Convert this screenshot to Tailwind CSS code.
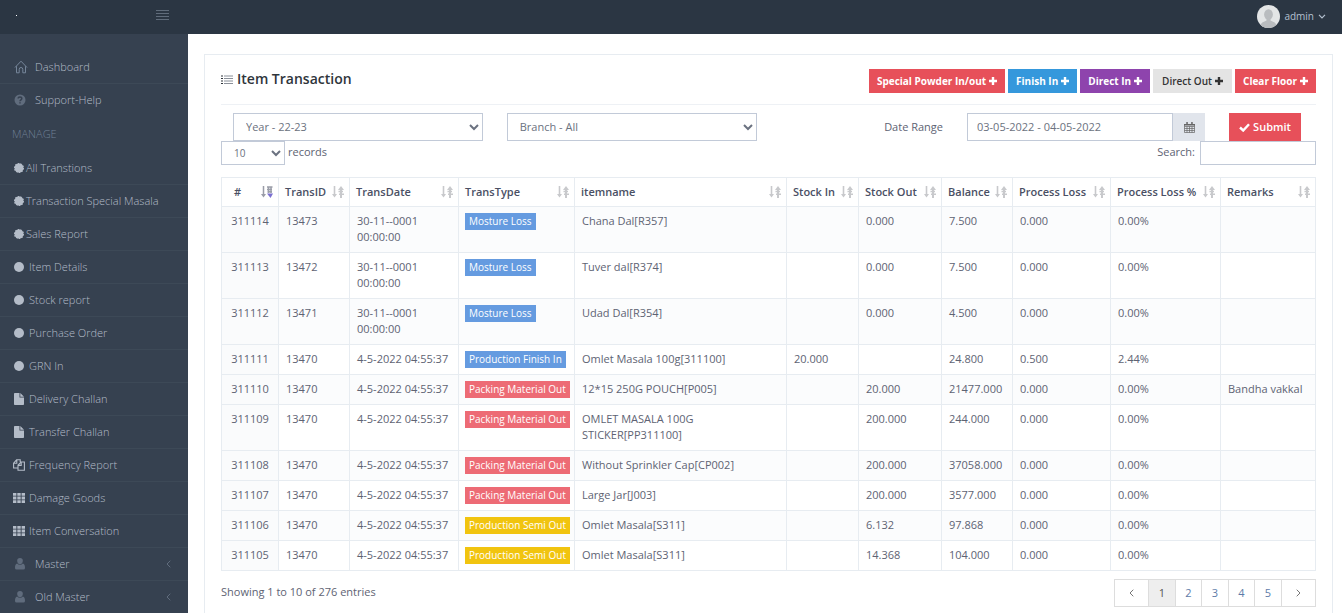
<!DOCTYPE html>
<html lang="en">
<head>
    <meta charset="UTF-8">
    <meta name="viewport" content="width=device-width, initial-scale=1.0">
    <title>Item Transaction</title>
    <script src="https://cdn.jsdelivr.net/npm/@tailwindcss/browser@4"></script>
</head>
<body class="flex h-screen flex-col overflow-hidden bg-white font-['Open_Sans',sans-serif] text-[11px] leading-4 text-[#5e6373]">

    <!-- icons -->
    <svg class="hidden">
        <symbol id="i-home" viewBox="0 0 14 14"><path d="M1 7.5 7 1.2l6 6.3M2.5 6.2v6.6h2.7V9.3a1.8 1.8 0 0 1 3.6 0v3.5h2.7V6.2" fill="none" stroke="currentColor"/></symbol>
        <symbol id="i-help" viewBox="0 0 12 12"><circle cx="6" cy="6" r="5.5" fill="currentColor"/><path d="M4.2 4.6c0-2.2 3.6-2.2 3.6 0C7.8 5.8 6 5.8 6 7.3M6 8.2v1.3" fill="none" stroke="#364150" stroke-width="1.5"/></symbol>
        <symbol id="i-cog" viewBox="0 0 10 10"><circle cx="5" cy="5" r="4.5" fill="currentColor"/><circle cx="5" cy="5" r="4.4" fill="none" stroke="currentColor" stroke-width="1.2" stroke-dasharray="1.6 1.1"/></symbol>
        <symbol id="i-dot" viewBox="0 0 10 10"><circle cx="5" cy="5" r="5" fill="currentColor"/></symbol>
        <symbol id="i-file" viewBox="0 0 10 12"><path d="M0 .8Q0 0 .8 0H5.5v4.5H10v6.7q0 .8-.8.8H.8Q0 12 0 11.2zM6.3 0 10 3.7H6.3z" fill="currentColor"/></symbol>
        <symbol id="i-copy" viewBox="0 0 12 12"><path d="M4.5 9H.6V4.2L3.6.8h3.6V3M3.8.8v3.4H.6M5 6.2 8 3h3.4v8.3H5zM8.2 3v3.4H5" fill="none" stroke="currentColor" stroke-width="1.1"/></symbol>
        <symbol id="i-th" viewBox="0 0 12 10"><path d="M0 0h3.4v2.8H0zM4.3 0h3.4v2.8H4.3zM8.6 0H12v2.8H8.6zM0 3.6h3.4v2.8H0zM4.3 3.6h3.4v2.8H4.3zM8.6 3.6H12v2.8H8.6zM0 7.2h3.4V10H0zM4.3 7.2h3.4V10H4.3zM8.6 7.2H12V10H8.6z" fill="currentColor"/></symbol>
        <symbol id="i-user" viewBox="0 0 10 12"><path d="M5 0a2.8 2.8 0 0 1 2.8 3C7.8 4.8 6.6 6.2 5 6.2S2.2 4.8 2.2 3A2.8 2.8 0 0 1 5 0M2.2 5.4C3.5 7.3 6.5 7.3 7.8 5.4 9.5 5.7 10 7.5 10 10q0 1.6-1.6 1.6H1.6Q0 11.6 0 10C0 7.5.5 5.7 2.2 5.4" fill="currentColor"/></symbol>
        <symbol id="i-left" viewBox="0 0 5 8"><path d="M4.3.7 1 4l3.300 3.300" fill="none" stroke="currentColor"/></symbol>
        <symbol id="i-right" viewBox="0 0 5 8"><path d="M.7.7 4 4 .7 7.3" fill="none" stroke="currentColor"/></symbol>
        <symbol id="i-plus" viewBox="0 0 8 8"><path d="M4 0v8M0 4h8" fill="none" stroke="currentColor" stroke-width="2.4"/></symbol>
        <symbol id="i-sort" viewBox="0 0 12 12"><path d="M2.5 0v10" stroke="currentColor" stroke-width="1.6"/><path d="M0 8h5L2.5 11.5zM6 4h6L9 0z" fill="currentColor"/><path d="M9 3v9" stroke="currentColor" stroke-width="2"/><path d="M6.5 5.5H11M7 8.3h5" stroke="currentColor" stroke-width="1.4"/></symbol>
        <symbol id="i-sorted" viewBox="0 0 12 12"><path d="M2.5 0v10M6 1h5.5M6 3.4h5M6.5 5.8H11M7.5 1v6M10 1v6" fill="none" stroke="#9a9da8" stroke-width="1.5"/><path d="M0 8h5L2.5 11.5z" fill="#9a9da8"/><path d="M6 7.5h6L9.5 12z" fill="#7a6fd0"/></symbol>
    </svg>

    <header class="flex h-[34px] shrink-0 items-center bg-[#2b3643] text-[#b4c0d0]">
        <div class="flex w-[188px] items-center justify-between pr-[19px] pb-1 pl-4">
            <a href="#" aria-label="Home" class="h-px w-px bg-white"></a>
            <button type="button" aria-label="Toggle menu" class="flex w-[13px] flex-col gap-[2px]">
                <span class="h-px w-full bg-[#606c7b]"></span>
                <span class="h-px w-full bg-[#606c7b]"></span>
                <span class="h-px w-full bg-[#606c7b]"></span>
                <span class="h-px w-full bg-[#606c7b]"></span>
            </button>
        </div>
        <button type="button" class="ml-auto flex items-center gap-1 pr-4 pb-[2px] text-[10px]">
            <svg class="h-[23px] w-[23px] rounded-full" viewBox="0 0 23 23"><path fill="#e3e5e6" d="M0 0h23v23H0z"/><ellipse cx="11.5" cy="9.5" rx="4.4" ry="5.2" fill="#b9bcbf"/><path d="M3 23c0-6 4-6 6.5-7.5V13h4v2.5C16 17 20 17 20 23z" fill="#b9bcbf"/></svg>
            <span>admin</span>
            <svg class="h-[5px] w-2" viewBox="0 0 8 5"><path d="M1 .8 4 3.8l3-3" fill="none" stroke="currentColor" stroke-width="1.2"/></svg>
        </button>
    </header>

    <div class="flex min-h-0 flex-1">
        <nav class="w-[188px] shrink-0 bg-[#364150] pt-[17px] font-light text-[#b4bcc8]">
            <a href="#" class="flex h-[33px] items-center gap-[7px] border-b border-[#3d4957] pl-[14px]"><svg class="h-[14px] w-[14px] text-[#76869a]"><use href="#i-home"/></svg>Dashboard</a>
            <a href="#" class="flex h-8 items-center gap-[9px] pl-[14px]"><svg class="h-3 w-3 text-[#606c7d]"><use href="#i-help"/></svg>Support-Help</a>
            <h3 class="flex h-9 items-center pl-3 text-[#708096]">MANAGE</h3>
            <a href="#" class="flex h-[33px] items-center gap-[2px] border-b border-[#3d4957] pl-[14px]"><svg class="h-[10px] w-[10px]"><use href="#i-cog"/></svg>All Transtions</a>
            <a href="#" class="flex h-[33px] items-center gap-[2px] border-b border-[#3d4957] pl-[14px]"><svg class="h-[10px] w-[10px]"><use href="#i-cog"/></svg>Transaction Special Masala</a>
            <a href="#" class="flex h-[33px] items-center gap-[2px] border-b border-[#3d4957] pl-[14px]"><svg class="h-[10px] w-[10px]"><use href="#i-cog"/></svg>Sales Report</a>
            <a href="#" class="flex h-[33px] items-center gap-[5px] border-b border-[#3d4957] pl-[14px]"><svg class="h-[10px] w-[10px]"><use href="#i-dot"/></svg>Item Details</a>
            <a href="#" class="flex h-[33px] items-center gap-[5px] border-b border-[#3d4957] pl-[14px]"><svg class="h-[10px] w-[10px]"><use href="#i-dot"/></svg>Stock report</a>
            <a href="#" class="flex h-[33px] items-center gap-[5px] border-b border-[#3d4957] pl-[14px]"><svg class="h-[10px] w-[10px]"><use href="#i-dot"/></svg>Purchase Order</a>
            <a href="#" class="flex h-[33px] items-center gap-[5px] border-b border-[#3d4957] pl-[14px]"><svg class="h-[10px] w-[10px]"><use href="#i-dot"/></svg>GRN In</a>
            <a href="#" class="flex h-[33px] items-center gap-[5px] border-b border-[#3d4957] pl-[14px]"><svg class="h-3 w-[10px]"><use href="#i-file"/></svg>Delivery Challan</a>
            <a href="#" class="flex h-[33px] items-center gap-[5px] border-b border-[#3d4957] pl-[14px]"><svg class="h-3 w-[10px]"><use href="#i-file"/></svg>Transfer Challan</a>
            <a href="#" class="flex h-[33px] items-center gap-1 border-b border-[#3d4957] pl-[13px]"><svg class="h-3 w-3"><use href="#i-copy"/></svg>Frequency Report</a>
            <a href="#" class="flex h-[33px] items-center gap-1 border-b border-[#3d4957] pl-[13px]"><svg class="h-[10px] w-3"><use href="#i-th"/></svg>Damage Goods</a>
            <a href="#" class="flex h-[33px] items-center gap-1 border-b border-[#3d4957] pl-[13px]"><svg class="h-[10px] w-3"><use href="#i-th"/></svg>Item Conversation</a>
            <a href="#" class="flex h-[33px] items-center gap-[10px] border-b border-[#3d4957] pr-[17px] pl-[15px]"><svg class="h-3 w-[10px] text-[#606c7d]"><use href="#i-user"/></svg>Master<svg class="ml-auto h-2 w-[5px] text-[#606c7d]"><use href="#i-left"/></svg></a>
            <a href="#" class="flex h-[33px] items-center gap-[10px] border-b border-[#3d4957] pr-[17px] pl-[15px]"><svg class="h-3 w-[10px] text-[#606c7d]"><use href="#i-user"/></svg>Old Master<svg class="ml-auto h-2 w-[5px] text-[#606c7d]"><use href="#i-left"/></svg></a>
        </nav>

        <main class="min-w-0 flex-1 pt-5 pr-[9px] pl-4">
            <section class="border border-[#e7ecf1] px-4 pt-[14px] pb-4">
                <div class="mb-2 flex items-start border-b border-[#eef1f5] pb-[11px]">
                    <h1 class="flex h-5 items-center gap-1 text-sm font-semibold text-[#2f353b]">
                        <svg class="h-[9px] w-3" viewBox="0 0 12 9"><path d="M0 1h2M0 3.5h2M0 6h2M0 8.5h2" stroke="#2f353b"/><path d="M3 1h9M3 3.5h9M3 6h9M3 8.5h9" stroke="#8a9099"/></svg>
                        Item Transaction
                    </h1>
                    <div class="ml-auto flex gap-[3px] text-[10px] font-bold text-white">
                        <button type="button" class="flex h-6 items-center gap-[3px] bg-[#e7505a] px-2 pb-px">Special Powder In/out<svg class="h-2 w-2"><use href="#i-plus"/></svg></button>
                        <button type="button" class="flex h-6 items-center gap-[3px] bg-[#3598dc] px-2 pb-px">Finish In<svg class="h-2 w-2"><use href="#i-plus"/></svg></button>
                        <button type="button" class="flex h-6 items-center gap-[3px] bg-[#8e44ad] px-2 pb-px">Direct In<svg class="h-2 w-2"><use href="#i-plus"/></svg></button>
                        <button type="button" class="flex h-6 items-center gap-[3px] bg-[#e4e4e4] px-[9px] pb-px font-semibold text-[#333]">Direct Out<svg class="h-2 w-2"><use href="#i-plus"/></svg></button>
                        <button type="button" class="flex h-6 items-center gap-[3px] bg-[#e7505a] px-2 pb-px">Clear Floor<svg class="h-2 w-2"><use href="#i-plus"/></svg></button>
                    </div>
                </div>

                <form class="flex items-center">
                    <div class="w-1/4 px-3">
                        <select aria-label="Year" class="block h-7 w-full border border-[#c2cad8] bg-white px-2 pb-[2px] text-[#6b7280]"><option>Year - 22-23</option></select>
                    </div>
                    <div class="w-1/4 px-3">
                        <select aria-label="Branch" class="block h-7 w-full border border-[#c2cad8] bg-white px-2 pb-[2px] text-[#6b7280]"><option>Branch - All</option></select>
                    </div>
                    <label for="range" class="mr-6 ml-auto">Date Range</label>
                    <div class="flex w-[238px]">
                        <input id="range" type="text" value="03-05-2022 - 04-05-2022" class="h-7 min-w-0 flex-1 border border-[#c2cad8] px-[9px] pb-[2px] text-[#6b7280]">
                        <button type="button" aria-label="Pick dates" class="flex w-8 items-center justify-center bg-[#e1e5ec] text-[#666]">
                            <svg class="h-[11px] w-[11px]" viewBox="0 0 11 11"><path d="M.5 2.5h10v8H.5zM.5 4.5h10M.5 6.5h10M.5 8.5h10M3 4.5v6M5.5 4.5v6M8 4.5v6" fill="none" stroke="currentColor" stroke-width=".7"/><path d="M0 2h11v1.6H0zM2.3 0h1.5v3H2.3zM7.2 0h1.5v3H7.2z" fill="currentColor"/></svg>
                        </button>
                    </div>
                    <button type="submit" class="mr-[15px] ml-6 flex h-7 w-[72px] items-center justify-center gap-[3px] bg-[#e7505a] font-semibold text-white">
                        <svg class="h-[9px] w-[11px]" viewBox="0 0 11 9"><path d="M1 4.5 4.2 7.5 10 1.2" fill="none" stroke="currentColor" stroke-width="2.4"/></svg>Submit
                    </button>
                </form>

                <div class="mb-3 flex items-start justify-between">
                    <label class="flex items-start gap-[3px]"><select class="h-6 w-16 border border-[#c2cad8] bg-white px-2 text-[10px] text-[#6b7280]"><option>10</option></select><span class="pt-[3px]">records</span></label>
                    <label class="flex items-start gap-[5px]"><span class="pt-[3px]">Search:</span><input type="search" class="h-6 w-[116px] border border-[#c2cad8] px-2"></label>
                </div>

                <table class="w-full table-fixed border-collapse">
                    <colgroup>
                        <col class="w-[57px]"><col class="w-[71px]"><col class="w-[109px]"><col class="w-[116px]"><col><col class="w-[72px]"><col class="w-[83px]"><col class="w-[71px]"><col class="w-[98px]"><col class="w-[110px]"><col class="w-[95px]">
                    </colgroup>
                    <thead><tr id="head"></tr></thead>
                    <tbody id="rows"></tbody>
                </table>

                <div class="mt-2 flex items-start justify-between">
                    <p class="pt-[5px]">Showing 1 to 10 of 276 entries</p>
                    <div class="flex h-7 divide-x divide-[#ddd] border border-[#ddd] text-[#5e7ba8]">
                        <a href="#" aria-label="Previous" class="flex w-[34px] items-center justify-center text-[#777]"><svg class="h-2 w-[5px]"><use href="#i-left"/></svg></a>
                        <a href="#" class="flex w-[27px] items-center justify-center bg-[#eee] text-[#555]">1</a>
                        <a href="#" class="flex w-[26px] items-center justify-center">2</a>
                        <a href="#" class="flex w-[27px] items-center justify-center">3</a>
                        <a href="#" class="flex w-[26px] items-center justify-center">4</a>
                        <a href="#" class="flex w-[27px] items-center justify-center">5</a>
                        <a href="#" aria-label="Next" class="flex w-[33px] items-center justify-center text-[#777]"><svg class="h-2 w-[5px]"><use href="#i-right"/></svg></a>
                    </div>
                </div>
            </section>
        </main>
    </div>

    <script>
        const columns = ['#', 'TransID', 'TransDate', 'TransType', 'itemname', 'Stock In', 'Stock Out', 'Balance', 'Process Loss', 'Process Loss %', 'Remarks'];

        const badgeColors = {
            'Mosture Loss': 'bg-[#659be0]',
            'Production Finish In': 'bg-[#659be0]',
            'Packing Material Out': 'bg-[#ed6b75]',
            'Production Semi Out': 'bg-[#f1c40f]',
        };

        const rows = [
            ['311114', '13473', '30-11--0001 00:00:00', 'Mosture Loss', 'Chana Dal[R357]', '', '0.000', '7.500', '0.000', '0.00%', ''],
            ['311113', '13472', '30-11--0001 00:00:00', 'Mosture Loss', 'Tuver dal[R374]', '', '0.000', '7.500', '0.000', '0.00%', ''],
            ['311112', '13471', '30-11--0001 00:00:00', 'Mosture Loss', 'Udad Dal[R354]', '', '0.000', '4.500', '0.000', '0.00%', ''],
            ['311111', '13470', '4-5-2022 04:55:37', 'Production Finish In', 'Omlet Masala 100g[311100]', '20.000', '', '24.800', '0.500', '2.44%', ''],
            ['311110', '13470', '4-5-2022 04:55:37', 'Packing Material Out', '12*15 250G POUCH[P005]', '', '20.000', '21477.000', '0.000', '0.00%', 'Bandha vakkal'],
            ['311109', '13470', '4-5-2022 04:55:37', 'Packing Material Out', 'OMLET MASALA 100G STICKER[PP311100]', '', '200.000', '244.000', '0.000', '0.00%', ''],
            ['311108', '13470', '4-5-2022 04:55:37', 'Packing Material Out', 'Without Sprinkler Cap[CP002]', '', '200.000', '37058.000', '0.000', '0.00%', ''],
            ['311107', '13470', '4-5-2022 04:55:37', 'Packing Material Out', 'Large Jar[J003]', '', '200.000', '3577.000', '0.000', '0.00%', ''],
            ['311106', '13470', '4-5-2022 04:55:37', 'Production Semi Out', 'Omlet Masala[S311]', '', '6.132', '97.868', '0.000', '0.00%', ''],
            ['311105', '13470', '4-5-2022 04:55:37', 'Production Semi Out', 'Omlet Masala[S311]', '', '14.368', '104.000', '0.000', '0.00%', ''],
        ];

        document.getElementById('head').innerHTML = columns.map((name, i) => `
            <th class="h-[29px] border border-[#e7ecf1] p-0 text-left font-semibold whitespace-nowrap text-[#4a5064]">
                <div class="flex items-center justify-between pr-[5px] ${i === 0 ? 'pl-3' : 'pl-[6px]'}">${name}
                    <svg class="h-3 w-3 shrink-0 text-[#c8c9cc]"><use href="${i === 0 ? '#i-sorted' : '#i-sort'}"/></svg>
                </div>
            </th>`).join('');

        document.getElementById('rows').innerHTML = rows.map(row => `
            <tr class="align-top odd:bg-[#fbfcfd]">${row.map((value, i) => {
                if (i === 0) return `<td class="border border-[#e7ecf1] bg-[#fafbfc] pt-[6px] pb-[7px] text-center">${value}</td>`;
                if (i === 3) return `<td class="border border-[#e7ecf1] px-[6px] pt-[6px] whitespace-nowrap"><span class="block w-fit px-1 text-[10px] leading-[17px] text-white ${badgeColors[value]}">${value}</span></td>`;
                return `<td class="border border-[#e7ecf1] pt-[6px] pr-1 pb-[7px] pl-[7px]">${value}</td>`;
            }).join('')}</tr>`).join('');
    </script>
</body>
</html>
